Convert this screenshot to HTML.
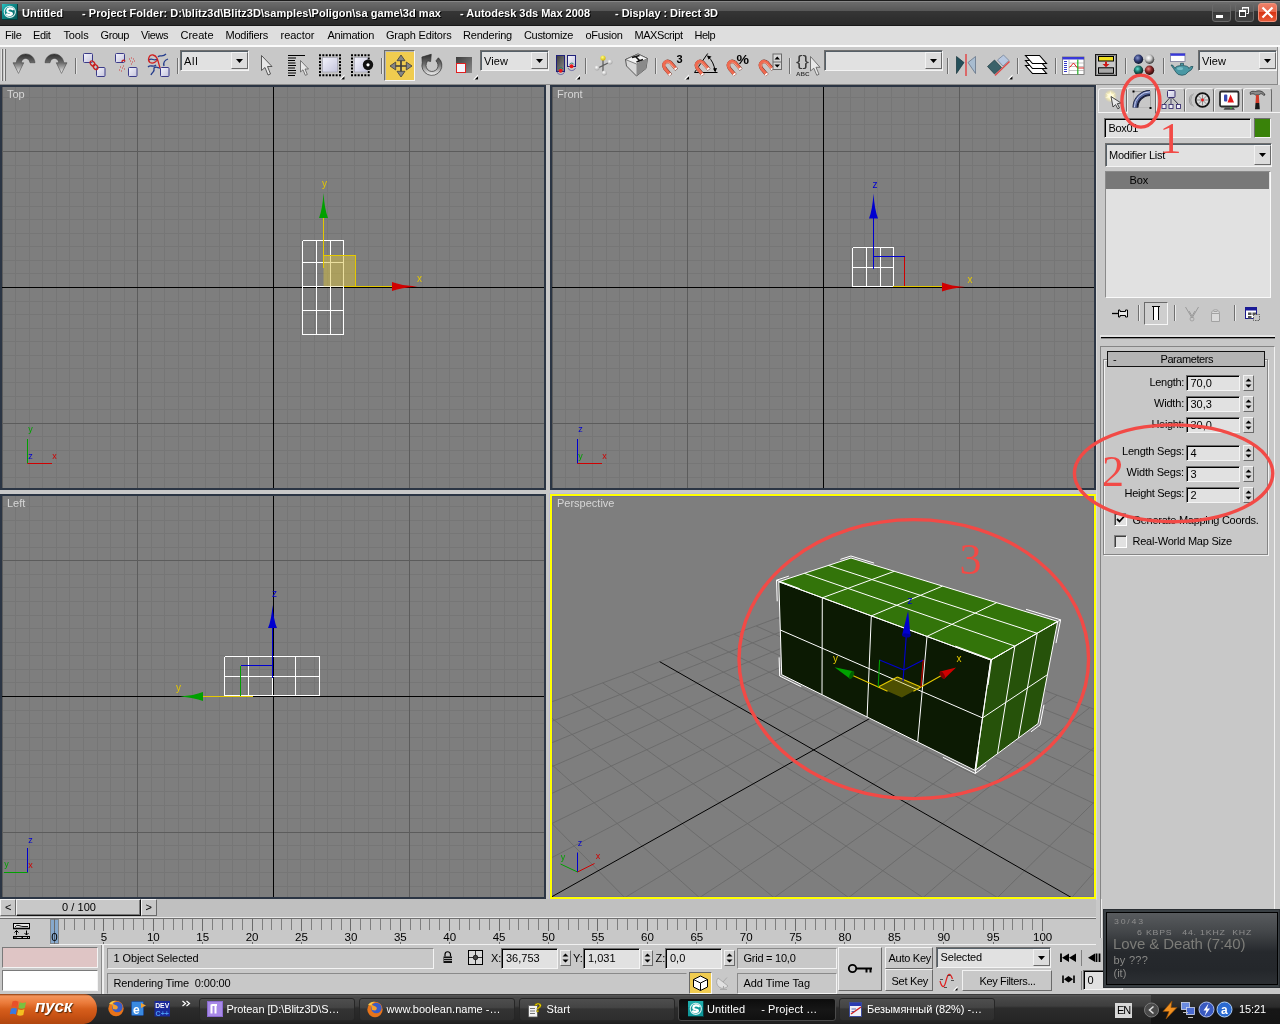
<!DOCTYPE html>
<html><head><meta charset="utf-8"><title>Untitled - Autodesk 3ds Max 2008</title>
<style>
html,body{margin:0;padding:0;}
body{width:1280px;height:1024px;overflow:hidden;position:relative;background:#c8c8c8;font-family:"Liberation Sans",sans-serif;font-size:11px;color:#000;}
.a{position:absolute;box-sizing:border-box;}
.t{position:absolute;white-space:pre;font-size:11px;}
svg{position:absolute;overflow:visible;}
.vp{position:absolute;box-sizing:border-box;border:2px solid #2b3544;background:#7e7e7e;overflow:hidden;}
.sunk{position:absolute;box-sizing:border-box;background:#e1e1e1;border:1px solid;border-color:#6e6e6e #f4f4f4 #f4f4f4 #6e6e6e;box-shadow:inset 1px 1px 0 #000;}
.dd{box-shadow:inset 1px 1px 0 #566068;}
.btn{position:absolute;box-sizing:border-box;background:#c8c8c8;border:1px solid;border-color:#f2f2f2 #6a6a6a #6a6a6a #f2f2f2;}
#wrap{position:absolute;left:0;top:0;width:1280px;height:1024px;will-change:transform;}
</style></head><body><div id="wrap">
<!-- title bar -->
<div class="a" style="left:0;top:0;width:1280px;height:26px;background:linear-gradient(#1c1c1c 0,#1c1c1c 1px,#888 1px,#888 2px,#6c6c6c 2px,#585858 10.5px,#363636 11px,#2a2a2a 25px,#181818 25px,#181818 26px);"></div>
<svg style="left:2px;top:4px" width="16" height="16" viewBox="0 0 16 16"><defs><linearGradient id="gTeal" x1="0" y1="0" x2="1" y2="1"><stop offset="0" stop-color="#2cc4c4"/><stop offset="0.35" stop-color="#0e9090"/><stop offset="1" stop-color="#065858"/></linearGradient></defs><rect x="0" y="0" width="16" height="16" fill="#053c3c"/><rect x="0" y="0" width="15" height="15" fill="url(#gTeal)"/><circle cx="7.800" cy="7.800" r="5.600" fill="none" stroke="#d8eeee" stroke-width="1.100"/><path d="M10.800 5.300C9 3.600 5.500 4.200 5.300 6.600S9 8 9.800 9.400S7.500 11.800 5 10.300" fill="none" stroke="#ffffff" stroke-width="2.200" stroke-linecap="round"/></svg>
<span class="t " style="left:22px;top:6.69px;line-height:13px;font-weight:bold;color:#fff;letter-spacing:0.008px;text-shadow:1px 1px 0 #000;">Untitled</span>
<span class="t " style="left:82px;top:6.69px;line-height:13px;font-weight:bold;color:#fff;letter-spacing:0.049px;text-shadow:1px 1px 0 #000;">- Project Folder: D:\blitz3d\Blitz3D\samples\Poligon\sa game\3d max</span>
<span class="t " style="left:460px;top:6.69px;line-height:13px;font-weight:bold;color:#fff;letter-spacing:-0.018px;text-shadow:1px 1px 0 #000;">- Autodesk 3ds Max 2008</span>
<span class="t " style="left:615px;top:6.69px;line-height:13px;font-weight:bold;color:#fff;letter-spacing:-0.044px;text-shadow:1px 1px 0 #000;">- Display : Direct 3D</span>
<!-- window buttons -->
<div class="a" style="left:1212px;top:3px;width:19px;height:19px;border-radius:3px;border:1px solid #6a6a6a;background:linear-gradient(#666 0,#585858 45%,#3a3a3a 50%,#444 100%);"></div>
<div class="a" style="left:1216px;top:15px;width:7px;height:3px;background:#fff;"></div>
<div class="a" style="left:1235px;top:3px;width:19px;height:19px;border-radius:3px;border:1px solid #6a6a6a;background:linear-gradient(#666 0,#585858 45%,#3a3a3a 50%,#444 100%);"></div>
<svg style="left:1235px;top:3px" width="19" height="19"><path d="M7.5 6.5V4.5H13.5V10.5H11.5" fill="none" stroke="#fff" stroke-width="1"/><rect x="4.5" y="7.5" width="6" height="6" fill="none" stroke="#fff" stroke-width="1"/><rect x="4" y="7" width="7" height="2" fill="#fff"/><rect x="7" y="4" width="7" height="1.5" fill="#fff"/></svg>
<div class="a" style="left:1258px;top:3px;width:19px;height:19px;border-radius:3px;border:1px solid #f0907a;background:linear-gradient(#ee8068 0,#e8664a 45%,#d83414 50%,#e85a38 100%);"></div>
<svg style="left:1258px;top:3px" width="19" height="19"><path d="M4.5 4.5L14.5 14.5M14.5 4.5L4.5 14.5" stroke="#fff" stroke-width="2.2"/></svg>
<!-- menu bar -->
<div class="a" style="left:0;top:26px;width:1280px;height:19px;background:#dedede;"></div>
<div class="a" style="left:0;top:45px;width:1280px;height:2px;background:#fbfbfb;"></div>
<span class="t " style="left:5px;top:28.69px;line-height:13px;letter-spacing:-0.306px;">File</span>
<span class="t " style="left:33px;top:28.69px;line-height:13px;letter-spacing:-0.364px;">Edit</span>
<span class="t " style="left:63.5px;top:28.69px;line-height:13px;letter-spacing:-0.136px;">Tools</span>
<span class="t " style="left:100.5px;top:28.69px;line-height:13px;letter-spacing:-0.414px;">Group</span>
<span class="t " style="left:141px;top:28.69px;line-height:13px;letter-spacing:-0.429px;">Views</span>
<span class="t " style="left:180.5px;top:28.69px;line-height:13px;letter-spacing:-0.003px;">Create</span>
<span class="t " style="left:225.5px;top:28.69px;line-height:13px;letter-spacing:-0.236px;">Modifiers</span>
<span class="t " style="left:280.5px;top:28.69px;line-height:13px;letter-spacing:-0.034px;">reactor</span>
<span class="t " style="left:327.5px;top:28.69px;line-height:13px;letter-spacing:-0.268px;">Animation</span>
<span class="t " style="left:386px;top:28.69px;line-height:13px;letter-spacing:-0.182px;">Graph Editors</span>
<span class="t " style="left:463px;top:28.69px;line-height:13px;letter-spacing:-0.195px;">Rendering</span>
<span class="t " style="left:524px;top:28.69px;line-height:13px;letter-spacing:-0.329px;">Customize</span>
<span class="t " style="left:585.5px;top:28.69px;line-height:13px;letter-spacing:-0.304px;">oFusion</span>
<span class="t " style="left:634.5px;top:28.69px;line-height:13px;letter-spacing:-0.440px;">MAXScript</span>
<span class="t " style="left:694.5px;top:28.69px;line-height:13px;letter-spacing:-0.530px;">Help</span>
<!-- toolbar -->
<div class="a" style="left:0;top:47px;width:1280px;height:38px;background:#c8c8c8;"></div>
<div class="a" style="left:0;top:84px;width:1279px;height:1px;background:#8a8a8a;"></div>
<div class="a" style="left:1277px;top:47px;width:1px;height:38px;background:#8a8a8a;"></div>
<div class="a" style="left:1278px;top:47px;width:2px;height:38px;background:#e8e8e8;"></div>
<!-- dropdowns -->
<div class="sunk dd" style="left:180px;top:50px;width:69px;height:21px;"></div>
<div class="btn" style="left:231px;top:52px;width:17px;height:17px;background:#dcdcdc;"></div>
<span class="t " style="left:184px;top:54.69px;line-height:13px;letter-spacing:0.758px;">All</span>
<div class="sunk dd" style="left:480px;top:50px;width:69px;height:21px;"></div>
<div class="btn" style="left:531px;top:52px;width:17px;height:17px;background:#dcdcdc;"></div>
<span class="t " style="left:484px;top:54.69px;line-height:13px;letter-spacing:0.089px;">View</span>
<div class="sunk dd" style="left:824px;top:50px;width:119px;height:21px;"></div>
<div class="btn" style="left:925px;top:52px;width:17px;height:17px;background:#dcdcdc;"></div>
<div class="sunk dd" style="left:1198px;top:50px;width:79px;height:21px;"></div>
<div class="btn" style="left:1259px;top:52px;width:17px;height:17px;background:#dcdcdc;"></div>
<span class="t " style="left:1202px;top:54.69px;line-height:13px;letter-spacing:0.089px;">View</span>
<!-- active move button -->
<div class="a" style="left:384px;top:50px;width:31px;height:31px;background:#f0cc50;border:1px solid;border-color:#6a6a6a #f6f6f6 #f6f6f6 #6a6a6a;box-shadow:inset 1px 1px 0 #b8b8b8;"></div>
<svg style="left:0;top:44px" width="1280" height="44" viewBox="0 44 1280 44">
<defs>
<linearGradient id="gArr" x1="0" y1="0" x2="0" y2="1"><stop offset="0" stop-color="#2e2e2e"/><stop offset="0.45" stop-color="#6a6a6a"/><stop offset="1" stop-color="#f4f4f4"/></linearGradient>
<linearGradient id="gBox" x1="0" y1="0" x2="1" y2="1"><stop offset="0" stop-color="#f4f4fc"/><stop offset="1" stop-color="#c4c4dc"/></linearGradient>
<linearGradient id="gDk" x1="0" y1="0" x2="1" y2="1"><stop offset="0" stop-color="#3c3c3c"/><stop offset="1" stop-color="#8a8a8a"/></linearGradient>
<linearGradient id="gMag" x1="0" y1="0" x2="1" y2="0"><stop offset="0" stop-color="#e0482a"/><stop offset="1" stop-color="#f6a088"/></linearGradient>
<radialGradient id="sBlue" cx="0.4" cy="0.35" r="0.7"><stop offset="0" stop-color="#8a98d0"/><stop offset="0.45" stop-color="#34407a"/><stop offset="1" stop-color="#080c1c"/></radialGradient>
<radialGradient id="sWhite" cx="0.4" cy="0.35" r="0.7"><stop offset="0" stop-color="#ffffff"/><stop offset="0.45" stop-color="#c8c8c8"/><stop offset="1" stop-color="#202020"/></radialGradient>
<radialGradient id="sTeal" cx="0.4" cy="0.35" r="0.7"><stop offset="0" stop-color="#60e0d0"/><stop offset="0.45" stop-color="#1c7068"/><stop offset="1" stop-color="#041410"/></radialGradient>
<radialGradient id="sRed" cx="0.4" cy="0.35" r="0.7"><stop offset="0" stop-color="#f08080"/><stop offset="0.45" stop-color="#882828"/><stop offset="1" stop-color="#1c0404"/></radialGradient>
<radialGradient id="sGray" cx="0.4" cy="0.35" r="0.7"><stop offset="0" stop-color="#ffffff"/><stop offset="1" stop-color="#a0a0a0"/></radialGradient>
<radialGradient id="sYel" cx="0.4" cy="0.35" r="0.7"><stop offset="0" stop-color="#ffff80"/><stop offset="1" stop-color="#d0b000"/></radialGradient>
<g id="fly"><path d="M-4.5 0.5L0.5 -4.5L0.5 0.5Z" fill="#fff"/><path d="M0.5 0.5L-2.8 0.5L0.5 -2.8Z" fill="#000"/></g>
<g id="magnet"><path d="M8.7 15.2L3.2 8.7C-0.2 3.2 4.8 -0.3 8.8 2.7L14.6 9.6" fill="none" stroke="#5a2a20" stroke-width="3.6"/><path d="M8.4 15L2.9 8.5C-0.5 3 4.5 -0.5 8.5 2.5L14.3 9.4" fill="none" stroke="#f06a50" stroke-width="3"/><path d="M3.6 6.5C2.8 3.5 5.5 2 8 3.6L12.5 8.8" fill="none" stroke="#f8a890" stroke-width="1"/><path d="M8.4 15L7.3 13.7M14.3 9.4L13.2 8.1" fill="none" stroke="#fff" stroke-width="3"/></g>
<path id="dd" d="M0 0H7L3.5 4Z" fill="#000"/>
</defs>
<!-- grip -->
<path d="M2.5 49V81M5.5 49V81" stroke="#6e6e6e" stroke-width="1"/><path d="M1.5 49V81M4.5 49V81" stroke="#e2e2e2" stroke-width="1"/>
<!-- separators -->
<path d="M75.5 58V74M177.5 58V74M381.5 58V74M585.5 58V74M655.5 58V74M789.5 58V74M947.5 58V74M1017.5 58V74M1055.5 58V74M1125.5 58V74M1163.5 58V74" stroke="#707070" stroke-width="1"/>
<path d="M76.5 58V74M178.5 58V74M382.5 58V74M586.5 58V74M656.5 58V74M790.5 58V74M948.5 58V74M1018.5 58V74M1056.5 58V74M1126.5 58V74M1164.5 58V74" stroke="#e4e4e4" stroke-width="1"/>
<!-- dropdown arrows -->
<use href="#dd" x="236" y="59"/><use href="#dd" x="536" y="59"/><use href="#dd" x="930" y="59"/><use href="#dd" x="1264" y="59"/>
<!-- undo -->
<path d="M13 62.75L18.5 73.4L23.75 62.75L21.25 62.75C21.5 57.5 29 56.5 30 62.75L35 62.75C34 51 17.5 51 16.25 62.75Z" fill="url(#gArr)" stroke="#3a3a3a" stroke-width="0.5"/>
<!-- redo -->
<path d="M67 62.75 L61.5 73.4 L56.25 62.75 L58.75 62.75 C58.5 57.5 51 56.5 50 62.75 L45 62.75 C46 51 62.5 51 63.75 62.75 Z" fill="url(#gArr)" stroke="#3a3a3a" stroke-width="0.5"/>
<!-- link -->
<rect x="83.5" y="53.5" width="9" height="9" rx="1" fill="url(#gBox)" stroke="#3a3a88"/><rect x="96.500" y="67.500" width="8.500" height="9" rx="1" fill="url(#gBox)" stroke="#3a3a88"/>
<ellipse cx="92.500" cy="63.500" rx="2" ry="2.800" transform="rotate(-40 92.500 63.500)" fill="none" stroke="#c82020" stroke-width="1.300"/><ellipse cx="95.500" cy="67" rx="2" ry="2.800" transform="rotate(-40 95.500 67)" fill="none" stroke="#c82020" stroke-width="1.300"/>
<!-- unlink -->
<rect x="115.500" y="53.500" width="9" height="9" rx="1" fill="url(#gBox)" stroke="#3a3a88"/><rect x="128.500" y="67.500" width="8.500" height="9" rx="1" fill="url(#gBox)" stroke="#3a3a88"/>
<path d="M122 62C122 60 124.500 59.500 125 61.500" fill="none" stroke="#c82020" stroke-width="1.400"/>
<path d="M129 59h1M131 58h1M133 59h1M130 61h1M132 62h1M134 61h1M131 64h1M120 67h1M122 68h1M119 70h1M121 71h1M123 66h1M124 69h1" stroke="#d04040" stroke-width="1"/>
<!-- bind space warp -->
<rect x="160.500" y="67.500" width="8.500" height="9" rx="1" fill="url(#gBox)" stroke="#3a3a88"/>
<path d="M149 60C152 57 154 62 157 59M158 57C160 54 162 58 166 54M148 67C151 64 153 68 156 65M164 66C163 62 165 60 168 59M151 75C152 71 155 73 154 68C156 66 158 68 160 68" fill="none" stroke="#243c8c" stroke-width="1.300"/>
<path d="M160 68C158 62 158 56 153 55C149 54.500 147 60 150 62.500C153 64 157 62 157.500 59" fill="none" stroke="#d02020" stroke-width="1.300"/>
<!-- select arrow -->
<path d="M261.500 55.500L261.500 70.500L265 67.500L268 75L270.500 74L267.500 66.500L272 66.500Z" fill="#e8e8e8" stroke="#4a4a4a" stroke-width="0.900"/>
<!-- select by name -->
<path d="M288 55.500H305M288 58H296M288 60.500H295M288 63H295.500M288 65.500H296M288 68H295M288 70.500H296M288 73H296M288 75.500H295" stroke="#000" stroke-width="1.100"/>
<path d="M300.500 60.500L300.500 72L303 69.800L305.300 75.300L307.300 74.500L305 69L308.500 69Z" fill="#e8e8e8" stroke="#5a5a5a" stroke-width="0.800"/>
<!-- rect region -->
<rect x="320" y="55.250" width="20" height="20" fill="none" stroke="#000" stroke-width="2" stroke-dasharray="2 1.333" stroke-dashoffset="1"/>
<rect x="322.500" y="57.500" width="15" height="14.500" fill="url(#gBox)" stroke="#9a9aa8" stroke-width="0.600"/>
<use href="#fly" x="344" y="79"/>
<!-- window/crossing -->
<rect x="352" y="55.250" width="16.667" height="20" fill="none" stroke="#000" stroke-width="2" stroke-dasharray="2 1.333" stroke-dashoffset="1"/>
<rect x="354.500" y="57.500" width="13" height="14.500" fill="url(#gBox)" stroke="#9a9aa8" stroke-width="0.600"/>
<circle cx="368" cy="64.800" r="5.200" fill="#111"/><circle cx="368" cy="64.800" r="1.600" fill="#fff"/>
<!-- move -->
<path d="M401 59V73M394 66H408" stroke="#3c3c3c" stroke-width="1.700"/><path d="M401 55L405 60.700L397 60.700ZM401 77L405 71.300L397 71.300ZM390 66L395.700 62L395.700 70ZM412 66L406.300 62L406.300 70Z" fill="#858585" stroke="#3c3c3c" stroke-width="0.800"/>
<!-- rotate -->
<path d="M438.4 57.8A10 10 0 1 1 422.3 62.5L421.9 57.1L431.25 54.25L430.6 61.5L427.5 60.8L426.4 63.4A6 6 0 1 0 435.9 60.9Z" fill="url(#gArr)" stroke="#2e2e2e" stroke-width="0.700"/>
<!-- scale -->
<rect x="456" y="57" width="16" height="16" fill="url(#gDk)"/><rect x="456.500" y="63.500" width="9" height="9" fill="#f4f4fc" stroke="#e02020"/>
<use href="#fly" x="477.500" y="79"/>
<!-- pivot -->
<rect x="556.500" y="55.500" width="8" height="16" fill="url(#gDk)" stroke="#20207a"/><rect x="567.500" y="55.500" width="8" height="11" fill="url(#gBox)" stroke="#20207a"/>
<path d="M557 72A4 4 0 0 0 564.500 72M568 68A4 4 0 0 0 575.500 68" fill="none" stroke="#4a4a9a" stroke-width="0.700"/>
<circle cx="560.600" cy="70.800" r="2" fill="#e81818"/><circle cx="571.500" cy="66.300" r="2" fill="#e81818"/>
<path d="M558.500 69A2.500 2.500 0 0 1 563 69M569.500 64.500A2.500 2.500 0 0 1 574 64.500" fill="none" stroke="#208060" stroke-width="0.900"/>
<use href="#fly" x="579.500" y="79"/>
<!-- manipulate -->
<path d="M603 59V72.500M598 68L610 62" stroke="#5a5a5a" stroke-width="1.200"/>
<circle cx="603" cy="58" r="2.600" fill="url(#sYel)"/><circle cx="610" cy="62" r="2.500" fill="url(#sGray)"/><circle cx="597" cy="68" r="2.500" fill="url(#sGray)"/><circle cx="604.300" cy="73" r="2.500" fill="url(#sGray)"/>
<!-- keyboard override -->
<path d="M625.500 59.500L638 54L647.500 58.500L646 68.500L636.500 76L626.500 66Z" fill="#d8d8d8" stroke="#3a3a3a" stroke-width="0.800"/>
<path d="M625.500 59.500L636.500 64L647.500 58.500L638 54Z" fill="#f2f2f2" stroke="#3a3a3a" stroke-width="0.600"/><path d="M636.500 64L636.500 76L646 68.500L647.500 58.500Z" fill="#8a8a8a"/>
<path d="M632 57.500L639.500 55.500M635.500 56.500L639.500 60.500M636.500 62L643 59.500" stroke="#111" stroke-width="1.600"/>
<!-- snaps -->
<use href="#magnet" x="662" y="60"/><text x="676.500" y="62.800" font-size="11" font-weight="bold" font-family="Liberation Sans,sans-serif">3</text><use href="#fly" x="688.500" y="79"/>
<path d="M694.500 72.500H717.500M694.500 72.500L707.700 53.500" stroke="#000" stroke-width="1"/><path d="M708 56.500Q714 62 715 71" fill="none" stroke="#000" stroke-width="1"/><path d="M707 55.500L711.500 56.500L708.500 59.500ZM715.300 72.500L713 68.500L717 68Z" fill="#000"/>
<use href="#magnet" x="694.500" y="60"/>
<use href="#magnet" x="726.500" y="60"/><text x="736.500" y="63.500" font-size="12" font-weight="bold" font-family="Liberation Sans,sans-serif" textLength="12.500" lengthAdjust="spacingAndGlyphs">%</text>
<use href="#magnet" x="758.500" y="60"/>
<rect x="772.500" y="53.500" width="9.500" height="16.500" fill="#6a6a6a"/><rect x="773.500" y="54.500" width="7.500" height="7" fill="#d6d6d6"/><rect x="773.500" y="62.500" width="7.500" height="6.500" fill="#d6d6d6"/><path d="M774.500 59.500H780L777.250 56.500ZM774.500 64.500H780L777.250 67.500Z" fill="#000"/>
<!-- named selection sets -->
<text x="796" y="66" font-size="14" font-family="Liberation Sans,sans-serif" fill="#3a3a3a" textLength="13" lengthAdjust="spacingAndGlyphs">{}</text>
<text x="796" y="75.500" font-size="5.500" font-weight="bold" font-family="Liberation Sans,sans-serif" fill="#3a3a3a" textLength="13.500" lengthAdjust="spacingAndGlyphs">ABC</text>
<path d="M810.500 56.500L810.500 71L813.800 68.200L816.800 75.300L819 74.300L816 67.300L820 67.300Z" fill="#e8e8e8" stroke="#5a5a5a" stroke-width="0.800"/>
<!-- mirror -->
<path d="M956.500 56.500V73.500L964 62.500Z" fill="#24505a" stroke="#16323a" stroke-width="0.700"/><path d="M975.500 56.500V73.500L968 62.500Z" fill="#a8bcd0" stroke="#5a6a80" stroke-width="0.700"/><path d="M966 54V76" stroke="#e05050" stroke-width="1.600"/>
<!-- align -->
<path d="M987.500 66.500L994.500 60L1001.500 67.500L994.500 74Z" fill="#3a626a" stroke="#1c3a40" stroke-width="0.700"/><path d="M997.500 60L1003.500 55L1009 60.500L1003 66Z" fill="#b8c8e0" stroke="#6a7a90" stroke-width="0.700"/><path d="M995 75.500L1009.500 61.500" stroke="#e04848" stroke-width="1.400"/>
<use href="#fly" x="1012" y="79"/>
<!-- layers -->
<path d="M1025.500 65.500H1039.500L1046.500 73.500H1032.500Z" fill="#fff" stroke="#000" stroke-width="1.100"/><path d="M1025.500 60.500H1039.500L1046.500 68.500H1032.500Z" fill="#fff" stroke="#000" stroke-width="1.100"/><path d="M1025.500 55.500H1039.500L1046.500 63.500H1032.500Z" fill="#fff" stroke="#000" stroke-width="1.100"/>
<!-- curve editor -->
<rect x="1062.500" y="57" width="21.500" height="17.500" fill="#fff" stroke="#6a6a6a" stroke-width="0.800"/><rect x="1062.500" y="57" width="21.500" height="2.500" fill="#3838d8"/>
<path d="M1069 59.500V74.500M1069 63H1084M1069 66.500H1084M1069 70.500H1084" stroke="#9a9a9a" stroke-width="0.600"/>
<path d="M1064 61.500h3M1064 63.500h3M1064 65.500h3M1064 67.500h3M1064 69.500h3M1064 71.500h3" stroke="#3838c8" stroke-width="1"/>
<path d="M1069.500 67.500L1073.500 63L1077.500 68H1084" fill="none" stroke="#e02020" stroke-width="1"/><path d="M1077.800 59.500V74.500" stroke="#20b020" stroke-width="1.200"/>
<!-- schematic -->
<rect x="1095.500" y="54.500" width="21" height="21" fill="#c8c8c8" stroke="#1a1a1a" stroke-width="1"/><rect x="1096.500" y="55.500" width="19" height="19" fill="none" stroke="#8a8a8a" stroke-width="1"/>
<rect x="1098.500" y="56.500" width="15" height="4.500" fill="#f0e020" stroke="#000" stroke-width="1"/><rect x="1098.500" y="67.800" width="15" height="5.500" fill="#a8a8a8" stroke="#000" stroke-width="1"/>
<path d="M1105 61.500H1107V64H1109.500L1106 67.300L1102.500 64H1105Z" fill="#d01818"/>
<!-- material editor -->
<circle cx="1138.500" cy="59.300" r="4.700" fill="url(#sBlue)"/><circle cx="1149.500" cy="59.300" r="4.700" fill="url(#sWhite)"/><circle cx="1138.500" cy="70.300" r="4.700" fill="url(#sTeal)"/><circle cx="1149.500" cy="70.300" r="4.700" fill="url(#sRed)"/>
<!-- render -->
<rect x="1170.500" y="53.500" width="14.500" height="8" fill="#fff" stroke="#7a7a9a" stroke-width="0.800"/><rect x="1170.500" y="53.500" width="14.500" height="2.300" fill="#3838d8"/>
<path d="M1171 65Q1173 64 1175 68.500C1175 64.500 1189 64.500 1189 68.500Q1190.500 65.500 1193 66.500Q1192.500 70 1188 72Q1186 75.300 1182 75.300Q1177.500 75.300 1175.800 72Q1173.500 68.500 1171 65Z" fill="#4a98a4" stroke="#1c4a54" stroke-width="0.700"/><path d="M1180.500 65.200V63.300H1183.500V65.200" fill="#4a98a4" stroke="#1c4a54" stroke-width="0.700"/><ellipse cx="1180" cy="68.500" rx="3" ry="1.500" fill="#8accd4" opacity="0.700"/>
</svg>
<!-- viewports -->
<div class="vp" style="left:0px;top:85px;width:546px;height:405px;border-color:#2b3544;"></div>
<div class="vp" style="left:550px;top:85px;width:546px;height:405px;border-color:#2b3544;"></div>
<div class="vp" style="left:0px;top:494px;width:546px;height:405px;border-color:#2b3544;"></div>
<div class="vp" style="left:550px;top:494px;width:546px;height:405px;border-color:#ffff00;box-shadow:0 0 0 1px #bcbcd4, inset 0 0 0 1px #72728e;"></div>
<svg style="left:0;top:0" width="1100" height="900" viewBox="0 0 1100 900" shape-rendering="crispEdges">
<path d="M15.5 87V488M29.5 87V488M42.5 87V488M56.5 87V488M69.5 87V488M83.5 87V488M97.5 87V488M110.5 87V488M124.5 87V488M151.5 87V488M164.5 87V488M178.5 87V488M192.5 87V488M205.5 87V488M219.5 87V488M232.5 87V488M246.5 87V488M259.5 87V488M287.5 87V488M300.5 87V488M314.5 87V488M327.5 87V488M341.5 87V488M354.5 87V488M368.5 87V488M382.5 87V488M395.5 87V488M422.5 87V488M436.5 87V488M449.5 87V488M463.5 87V488M477.5 87V488M490.5 87V488M504.5 87V488M517.5 87V488M531.5 87V488M2 97.5H544M2 111.5H544M2 124.5H544M2 138.5H544M2 165.5H544M2 178.5H544M2 192.5H544M2 206.5H544M2 219.5H544M2 233.5H544M2 246.5H544M2 260.5H544M2 273.5H544M2 301.5H544M2 314.5H544M2 328.5H544M2 341.5H544M2 355.5H544M2 368.5H544M2 382.5H544M2 396.5H544M2 409.5H544M2 436.5H544M2 450.5H544M2 463.5H544M2 477.5H544" stroke="#767676" stroke-width="1"/>
<path d="M2.5 87V488M137.5 87V488M409.5 87V488M2 151.5H544M2 423.5H544" stroke="#5c5c5c" stroke-width="1"/>
<path d="M273.5 87V488M2 287.5H544" stroke="#000" stroke-width="1"/>
<path d="M565.5 87V488M579.5 87V488M592.5 87V488M606.5 87V488M619.5 87V488M633.5 87V488M647.5 87V488M660.5 87V488M674.5 87V488M701.5 87V488M714.5 87V488M728.5 87V488M742.5 87V488M755.5 87V488M769.5 87V488M782.5 87V488M796.5 87V488M809.5 87V488M837.5 87V488M850.5 87V488M864.5 87V488M877.5 87V488M891.5 87V488M904.5 87V488M918.5 87V488M932.5 87V488M945.5 87V488M972.5 87V488M986.5 87V488M999.5 87V488M1013.5 87V488M1027.5 87V488M1040.5 87V488M1054.5 87V488M1067.5 87V488M1081.5 87V488M552 97.5H1094M552 111.5H1094M552 124.5H1094M552 138.5H1094M552 165.5H1094M552 178.5H1094M552 192.5H1094M552 206.5H1094M552 219.5H1094M552 233.5H1094M552 246.5H1094M552 260.5H1094M552 273.5H1094M552 301.5H1094M552 314.5H1094M552 328.5H1094M552 341.5H1094M552 355.5H1094M552 368.5H1094M552 382.5H1094M552 396.5H1094M552 409.5H1094M552 436.5H1094M552 450.5H1094M552 463.5H1094M552 477.5H1094" stroke="#767676" stroke-width="1"/>
<path d="M552.5 87V488M687.5 87V488M959.5 87V488M552 151.5H1094M552 423.5H1094" stroke="#5c5c5c" stroke-width="1"/>
<path d="M823.5 87V488M552 287.5H1094" stroke="#000" stroke-width="1"/>
<path d="M15.5 496V897M29.5 496V897M42.5 496V897M56.5 496V897M69.5 496V897M83.5 496V897M97.5 496V897M110.5 496V897M124.5 496V897M151.5 496V897M164.5 496V897M178.5 496V897M192.5 496V897M205.5 496V897M219.5 496V897M232.5 496V897M246.5 496V897M259.5 496V897M287.5 496V897M300.5 496V897M314.5 496V897M327.5 496V897M341.5 496V897M354.5 496V897M368.5 496V897M382.5 496V897M395.5 496V897M422.5 496V897M436.5 496V897M449.5 496V897M463.5 496V897M477.5 496V897M490.5 496V897M504.5 496V897M517.5 496V897M531.5 496V897M2 506.5H544M2 520.5H544M2 533.5H544M2 547.5H544M2 574.5H544M2 587.5H544M2 601.5H544M2 615.5H544M2 628.5H544M2 642.5H544M2 655.5H544M2 669.5H544M2 682.5H544M2 710.5H544M2 723.5H544M2 737.5H544M2 750.5H544M2 764.5H544M2 777.5H544M2 791.5H544M2 805.5H544M2 818.5H544M2 845.5H544M2 859.5H544M2 872.5H544M2 886.5H544" stroke="#767676" stroke-width="1"/>
<path d="M2.5 496V897M137.5 496V897M409.5 496V897M2 560.5H544M2 832.5H544" stroke="#5c5c5c" stroke-width="1"/>
<path d="M273.5 496V897M2 696.5H544" stroke="#000" stroke-width="1"/>
</svg>
<svg style="left:0;top:0" width="1100" height="900" viewBox="0 0 1100 900">
<path d="M302.5 240.5V334.5M316.5 240.5V334.5M330.5 240.5V334.5M343.5 240.5V334.5M302.5 240.5H343.5M302.5 262.5H343.5M302.5 286.5H343.5M302.5 310.5H343.5M302.5 334.5H343.5" stroke="#fff" stroke-width="1" fill="none" shape-rendering="crispEdges"/>
<rect x="323.5" y="255.5" width="31.500" height="31" fill="#d8c040" fill-opacity="0.5"/>
<path d="M323.5 255.5H355V286.5M323.5 218V267.5M343.5 286.5H392" stroke="#e4c800" stroke-width="1" fill="none" shape-rendering="crispEdges"/>
<path d="M323.5 193Q322.500 209 319 218H328Q324.500 209 323.500 193Z" fill="#00a000"/>
<path d="M417.5 286.500Q401 285.500 392 282V291Q401 287.500 417.500 286.500Z" fill="#d00000"/>
<text x="324.5" y="187" fill="#e4c800" font-size="10" font-family="Liberation Sans,sans-serif" text-anchor="middle">y</text>
<text x="419.5" y="282" fill="#e4c800" font-size="10" font-family="Liberation Sans,sans-serif" text-anchor="middle">x</text>
<path d="M27.5 439V463.500" stroke="#00a000" stroke-width="1"/><path d="M27.500 463.500H52" stroke="#d00000" stroke-width="1"/>
<text x="30.5" y="432" fill="#00a000" font-size="9" font-family="Liberation Sans,sans-serif" text-anchor="middle">y</text>
<text x="30.5" y="458.5" fill="#0000d0" font-size="9" font-family="Liberation Sans,sans-serif" text-anchor="middle">z</text>
<text x="54.5" y="458.5" fill="#d00000" font-size="9" font-family="Liberation Sans,sans-serif" text-anchor="middle">x</text>
<path d="M852.5 247.5V286.5M866.5 247.5V286.5M880.5 247.5V286.5M893.5 247.5V286.5M852.5 247.5H893.5M852.5 267.5H893.5M852.5 286.5H893.5" stroke="#fff" stroke-width="1" fill="none" shape-rendering="crispEdges"/>
<path d="M873.5 218V268.5M873.5 256.5H905" stroke="#0000d0" stroke-width="1" fill="none" shape-rendering="crispEdges"/>
<path d="M904.5 256.5V287" stroke="#d00000" stroke-width="1" fill="none" shape-rendering="crispEdges"/>
<path d="M893 286.500H942" stroke="#e4c800" stroke-width="1" fill="none" shape-rendering="crispEdges"/>
<path d="M873.5 193.500Q872.500 209.500 869 218.500H878Q874.500 209.500 873.500 193.500Z" fill="#0000d0"/>
<path d="M965 287Q951 286 942 282.500V291.500Q951 288 965 287Z" fill="#d00000"/>
<text x="875" y="187.5" fill="#0000d0" font-size="10" font-family="Liberation Sans,sans-serif" text-anchor="middle">z</text>
<text x="970" y="283" fill="#e4c800" font-size="10" font-family="Liberation Sans,sans-serif" text-anchor="middle">x</text>
<path d="M577.5 439V463.500" stroke="#0000d0" stroke-width="1"/><path d="M577.500 463.500H602" stroke="#d00000" stroke-width="1"/>
<text x="580.5" y="432" fill="#0000d0" font-size="9" font-family="Liberation Sans,sans-serif" text-anchor="middle">z</text>
<text x="580.5" y="458.5" fill="#00a000" font-size="9" font-family="Liberation Sans,sans-serif" text-anchor="middle">y</text>
<text x="604.5" y="458.5" fill="#d00000" font-size="9" font-family="Liberation Sans,sans-serif" text-anchor="middle">x</text>
<path d="M224.5 656.5V695.5M248.5 656.5V695.5M272.5 656.5V695.5M295.5 656.5V695.5M319.5 656.5V695.5M224.5 656.5H319.5M224.5 676.5H319.5M224.5 695.5H319.5" stroke="#fff" stroke-width="1" fill="none" shape-rendering="crispEdges"/>
<path d="M272.5 627.500V677.500M240.500 665.500H272.500" stroke="#0000d0" stroke-width="1" fill="none" shape-rendering="crispEdges"/>
<path d="M240.500 665.500V696" stroke="#00a000" stroke-width="1" fill="none" shape-rendering="crispEdges"/>
<path d="M203 696H253" stroke="#e4c800" stroke-width="1" fill="none" shape-rendering="crispEdges"/>
<path d="M272.500 605Q271.500 620 268 628H277Q273.500 620 272.500 605Z" fill="#0000d0"/>
<path d="M180 696.500Q194 695.500 203 692V701Q194 697.500 180 696.500Z" fill="#00a000"/>
<text x="274.5" y="596.5" fill="#0000d0" font-size="10" font-family="Liberation Sans,sans-serif" text-anchor="middle">z</text>
<text x="178.5" y="691" fill="#e4c800" font-size="10" font-family="Liberation Sans,sans-serif" text-anchor="middle">y</text>
<path d="M27.500 848V872.500" stroke="#0000d0" stroke-width="1"/><path d="M4 872.500H27.500" stroke="#00a000" stroke-width="1"/>
<text x="30.5" y="842.5" fill="#0000d0" font-size="9" font-family="Liberation Sans,sans-serif" text-anchor="middle">z</text>
<text x="30.5" y="867.5" fill="#d00000" font-size="9" font-family="Liberation Sans,sans-serif" text-anchor="middle">x</text>
<text x="6.5" y="867" fill="#00a000" font-size="9" font-family="Liberation Sans,sans-serif" text-anchor="middle">y</text>
<text x="7" y="98" fill="#d6d6d6" font-size="11" font-family="Liberation Sans,sans-serif">Top</text>
<text x="557" y="98" fill="#d6d6d6" font-size="11" font-family="Liberation Sans,sans-serif">Front</text>
<text x="7" y="507" fill="#d6d6d6" font-size="11" font-family="Liberation Sans,sans-serif">Left</text>
<text x="557" y="507" fill="#d6d6d6" font-size="11" font-family="Liberation Sans,sans-serif">Perspective</text>
</svg>
<svg style="left:552px;top:496px" width="542" height="401" viewBox="552 496 542 401">
<defs><clipPath id="cpv"><rect x="552" y="496" width="542" height="401"/></clipPath></defs><g clip-path="url(#cpv)">
<path d="M806.6 1197.7L423.5 749.5M806.6 1197.7L1201.9 750.2M860.1 1137.1L464.3 734.3M754.9 1137.3L1161.9 735.0M906.7 1084.4L502.5 720.2M709.9 1084.6L1124.6 720.8M947.7 1038.0L538.0 706.9M670.3 1038.2L1089.7 707.6M984.0 996.9L571.4 694.5M635.1 997.1L1057.0 695.2M1016.4 960.2L602.6 682.9M603.7 960.4L1026.3 683.5M1045.5 927.3L632.0 672.0M575.6 927.4L997.4 672.5M1095.5 870.7L685.8 652.0M527.0 870.6L944.4 652.4M1117.2 846.2L710.5 642.8M505.9 846.0L920.1 643.1M1137.0 823.7L733.9 634.1M486.6 823.4L897.1 634.4M1155.2 803.1L756.0 625.9M468.9 802.7L875.3 626.1M1172.0 784.1L777.0 618.1M452.6 783.6L854.5 618.2M1187.6 766.5L797.0 610.6M437.5 765.9L834.8 610.7M1201.9 750.2L816.0 603.6M423.5 749.5L816.0 603.6" stroke="#6a6a6a" stroke-width="0.9" fill="none"/>
<path d="M1071.7 897.7L659.7 661.7M550.1 897.7L970.2 662.2" stroke="#000" stroke-width="1" fill="none"/>
<path d="M990.8 660.0L1057.7 621.4L851.0 558.0L778.8 581.7Z" fill="#33740a"/>
<path d="M975.0 770.4L781.7 674.7L778.8 581.7L990.8 660.0Z" fill="#0c1a03"/>
<path d="M975.0 770.4L1038.0 723.6L1057.7 621.4L990.8 660.0Z" fill="#26520a"/>
<path d="M990.8 660.0L1057.7 621.4M927.0 636.4L996.6 602.7M871.3 615.9L942.5 586.1M822.3 597.8L894.3 571.3M778.8 581.7L851.0 558.0M990.8 660.0L778.8 581.7M1014.9 646.1L804.4 573.3M1037.2 633.3L828.4 565.4M1057.7 621.4L851.0 558.0M975.0 770.4L990.8 660.0M917.7 742.0L927.0 636.4M867.1 717.0L871.3 615.9M822.0 694.7L822.3 597.8M781.7 674.7L778.8 581.7M975.0 770.4L781.7 674.7M982.5 717.9L780.3 630.0M990.8 660.0L778.8 581.7M975.0 770.4L990.8 660.0M997.5 753.6L1014.9 646.1M1018.5 738.1L1037.2 633.3M1038.0 723.6L1057.7 621.4M975.0 770.4L1038.0 723.6M982.5 717.9L1047.4 674.7M990.8 660.0L1057.7 621.4" stroke="#fff" stroke-width="1" fill="none"/>
<path d="M975.3 773.5L986.2 765.3M975.3 773.5L942.9 757.3M975.3 773.5L978.4 751.7M991.7 659.5L1003.5 652.7M991.7 659.5L955.4 646.1M991.7 659.5L988.0 685.0M779.7 676.0L801.2 686.7M779.7 676.0L779.1 657.4M776.5 580.2L788.9 576.1M776.5 580.2L799.7 588.7M776.5 580.2L777.2 601.3M1040.0 725.0L1031.0 731.8M1040.0 725.0L1044.0 704.7M1060.6 619.8L1051.1 625.3M1060.6 619.8L1026.0 609.3M1060.6 619.8L1056.0 643.1M850.9 556.0L840.4 559.4M850.9 556.0L874.1 563.1" stroke="#fff" stroke-width="1" fill="none"/>
<path d="M901.8 697.6L920.9 687.0L897.4 676.9L878.2 686.9Z" fill="rgba(200,180,0,0.35)"/>
<path d="M920.9 687.0L897.4 676.9M897.4 676.9L878.2 686.9M913.4 691.2L942.3 675.1M887.5 691.2L851.7 675.0" stroke="#e4c800" stroke-width="1.1" fill="none"/>
<path d="M903.0 681.2L906.3 635.4M903.8 670.0L923.3 659.9M903.8 670.0L879.6 659.9" stroke="#0000d0" stroke-width="1.1" fill="none"/>
<path d="M920.9 687.0L923.3 659.9" stroke="#d00000" stroke-width="1.1" fill="none"/>
<path d="M878.2 686.9L879.6 659.9" stroke="#00a000" stroke-width="1.1" fill="none"/>
<path d="M956.1 667.4L944.4 678.8L940.3 671.4Z" fill="#d00000"/><ellipse cx="942.3" cy="675.1" rx="4.2" ry="2" transform="rotate(60.9 942.3 675.1)" fill="#800000"/>
<path d="M834.6 667.3L853.4 671.2L850.0 678.8Z" fill="#00a000"/><ellipse cx="851.7" cy="675.0" rx="4.2" ry="2" transform="rotate(-65.7 851.7 675.0)" fill="#006000"/>
<path d="M908.1 610.7L910.5 635.7L902.1 635.1Z" fill="#0000d0"/><ellipse cx="906.3" cy="635.4" rx="4.2" ry="2" transform="rotate(4.1 906.3 635.4)" fill="#0000a0"/>
<text x="910" y="604" fill="#0000d0" font-size="10" font-family="Liberation Sans,sans-serif" text-anchor="middle">z</text>
<text x="959" y="662" fill="#e4c800" font-size="10" font-family="Liberation Sans,sans-serif" text-anchor="middle">x</text>
<text x="835.5" y="662" fill="#e4c800" font-size="10" font-family="Liberation Sans,sans-serif" text-anchor="middle">y</text>
<path d="M577.5 872V852.5" stroke="#0000d0" stroke-width="1"/><path d="M577.5 872L594.500 863.500" stroke="#d00000" stroke-width="1"/><path d="M577.500 872L560.500 864" stroke="#00a000" stroke-width="1"/>
<text x="580" y="846" fill="#0000d0" font-size="9" font-family="Liberation Sans,sans-serif" text-anchor="middle">z</text>
<text x="563" y="859.5" fill="#00a000" font-size="9" font-family="Liberation Sans,sans-serif" text-anchor="middle">y</text>
<text x="598" y="858.5" fill="#d00000" font-size="9" font-family="Liberation Sans,sans-serif" text-anchor="middle">x</text>
</g></svg>
<!-- command panel -->
<div class="a" style="left:1096px;top:85px;width:184px;height:830px;background:#c8c8c8;"></div>
<div class="a" style="left:1096px;top:85px;width:1px;height:815px;background:#d8d8d8;"></div>
<!-- tabs -->
<div class="a" style="left:1098px;top:112px;width:182px;height:1px;background:#f4f4f4;"></div>
<div class="a" style="left:1098px;top:88px;width:29px;height:24px;border:1px solid;border-color:#f0f0f0 #6a6a6a transparent #f0f0f0;border-radius:3px 3px 0 0;"></div>
<div class="a" style="left:1156px;top:88px;width:29px;height:24px;border:1px solid;border-color:#f0f0f0 #6a6a6a transparent #f0f0f0;border-radius:3px 3px 0 0;"></div>
<div class="a" style="left:1185px;top:88px;width:29px;height:24px;border:1px solid;border-color:#f0f0f0 #6a6a6a transparent #f0f0f0;border-radius:3px 3px 0 0;"></div>
<div class="a" style="left:1214px;top:88px;width:29px;height:24px;border:1px solid;border-color:#f0f0f0 #6a6a6a transparent #f0f0f0;border-radius:3px 3px 0 0;"></div>
<div class="a" style="left:1243px;top:88px;width:29px;height:24px;border:1px solid;border-color:#f0f0f0 #6a6a6a transparent #f0f0f0;border-radius:3px 3px 0 0;"></div>
<div class="a" style="left:1127px;top:87px;width:29px;height:27px;background:#c8c8c8;border:1px solid;border-color:#f0f0f0 #6a6a6a transparent #f0f0f0;border-radius:3px 3px 0 0;"></div>
<svg style="left:1096px;top:84px" width="184" height="32" viewBox="1096 84 184 32">
<defs>
<radialGradient id="gStar"><stop offset="0" stop-color="#ffffff"/><stop offset="0.4" stop-color="#fff8c0"/><stop offset="1" stop-color="#f0e090" stop-opacity="0"/></radialGradient>
<linearGradient id="gTube" x1="0" y1="0" x2="1" y2="1"><stop offset="0" stop-color="#6a7ab0"/><stop offset="1" stop-color="#2a3460"/></linearGradient>
</defs>
<!-- create -->
<circle cx="1110.500" cy="96" r="6.500" fill="url(#gStar)"/><path d="M1110.500 90.500L1111.300 95L1115.500 93L1112.300 96L1116 98L1111.500 97.300L1110.500 101.500L1109.500 97.200L1105 98L1108.700 95.800L1105.500 93L1109.700 94.800Z" fill="#fffbe0"/>
<path d="M1111 96.500L1121 103L1117.300 103.700L1119.500 108L1117.800 108.800L1115.600 104.600L1113 107Z" fill="#e8e8e8" stroke="#222" stroke-width="0.800"/>
<!-- modify -->
<path d="M1133.500 91.500H1150.500V107.500" fill="none" stroke="#8a8a8a" stroke-width="0.600"/><path d="M1133.500 91.500V107.500H1150.500" fill="none" stroke="#aaa" stroke-width="0.500"/>
<path d="M1135.500 107.500A14.500 14.500 0 0 1 1150 93" fill="none" stroke="#10142a" stroke-width="6"/>
<path d="M1135.500 107.500A14.500 14.500 0 0 1 1150 93" fill="none" stroke="#5a6aa0" stroke-width="4.600"/>
<path d="M1134.300 107.500A15.700 15.700 0 0 1 1150 91.800" fill="none" stroke="#c8d0f0" stroke-width="1"/>
<path d="M1137.200 107.500A12.800 12.800 0 0 1 1150 94.700" fill="none" stroke="#10142a" stroke-width="1.100"/>
<rect x="1132.500" y="90.500" width="2" height="2" fill="#000"/><rect x="1149.500" y="107" width="2" height="2" fill="#000"/>
<!-- hierarchy -->
<path d="M1171 97.500V104.500M1170 97.500L1163.800 104.500M1172 97.500L1178.500 104.500" stroke="#3a3a4a" stroke-width="1"/><path d="M1171 98V104.500" stroke="#8a8a9a" stroke-width="1.600"/>
<rect x="1167.500" y="90.500" width="7.500" height="7" rx="1" fill="url(#gBox)" stroke="#3a3070" stroke-width="1"/>
<rect x="1162" y="104.500" width="4" height="4" fill="#f0f0fa" stroke="#3a3070" stroke-width="0.900"/><rect x="1169" y="104.500" width="4" height="4" fill="#f0f0fa" stroke="#3a3070" stroke-width="0.900"/><rect x="1176.500" y="104.500" width="4" height="4" fill="#f0f0fa" stroke="#3a3070" stroke-width="0.900"/>
<!-- motion -->
<path d="M1193.500 93.500A9 9 0 0 0 1193.500 106.500M1191.500 94.500A8 8 0 0 0 1191.500 105.500" fill="none" stroke="#909090" stroke-width="0.800"/>
<circle cx="1202.500" cy="100" r="6.800" fill="#dcdcdc" stroke="#111" stroke-width="1.700"/>
<path d="M1202.500 94.500V105.500M1197 100H1208M1198.600 96.100L1206.400 103.900M1206.400 96.100L1198.600 103.900" stroke="#555" stroke-width="0.600"/><circle cx="1202.500" cy="100" r="1.400" fill="#f01818"/>
<!-- display -->
<rect x="1220" y="91.500" width="18.500" height="15" rx="1.500" fill="#fff" stroke="#2a2a2a" stroke-width="1.800"/>
<rect x="1224" y="94.500" width="3.300" height="7" rx="1" fill="#3a4ab0"/><path d="M1227.500 102.500L1230.500 94.500L1234 102.500Z" fill="#e81818"/>
<path d="M1225 107.500H1233.500L1235 109.700H1223.500Z" fill="#4a4a4a"/><rect x="1230" y="107.300" width="2" height="1.200" fill="#30c030"/>
<!-- utilities -->
<path d="M1250 92.500C1252 90.500 1254 91.500 1255.500 91.500C1259 90 1263.500 91 1265 95L1263.500 95.300C1262 93 1260 93.500 1259 95H1255.500C1254 93.500 1252 93.500 1250.500 94.500Z" fill="#8a8a8a" stroke="#222" stroke-width="0.700"/>
<path d="M1256 95H1258.800L1259.300 103H1255.500Z" fill="#d03a28"/><path d="M1255.500 103H1259.300L1259.800 109.300H1255Z" fill="#1a1a1a"/>
</svg>
<!-- name + color -->
<div class="sunk" style="left:1104px;top:118px;width:147px;height:20px;"></div>
<span class="t " style="left:1108.5px;top:121.69px;line-height:13px;letter-spacing:-0.338px;">Box01</span>
<div class="a" style="left:1254px;top:118px;width:17px;height:20px;background:#398209;border:1px solid;border-color:#6e6e6e #f4f4f4 #f4f4f4 #6e6e6e;"></div>
<!-- modifier list -->
<div class="sunk dd" style="left:1105px;top:143px;width:167px;height:24px;"></div>
<div class="btn" style="left:1254px;top:145px;width:17px;height:20px;background:#dcdcdc;"></div>
<svg style="left:1259px;top:153px" width="7" height="4"><path d="M0 0H7L3.500 4Z" fill="#000"/></svg>
<span class="t " style="left:1109px;top:148.69px;line-height:13px;letter-spacing:-0.254px;">Modifier List</span>
<!-- stack -->
<div class="a" style="left:1105px;top:171px;width:166px;height:127px;background:#e1e1e1;border:1px solid;border-color:#8a8a8a #fafafa #fafafa #8a8a8a;"></div>
<div class="a" style="left:1106px;top:172px;width:163px;height:17px;background:#787878;"></div>
<span class="t " style="left:1129.5px;top:174.19px;line-height:13px;letter-spacing:-0.152px;">Box</span>
<!-- stack buttons -->
<div class="a" style="left:1144px;top:302px;width:24px;height:23px;background:#cecece;border:1px solid;border-color:#6a6a6a #f6f6f6 #f6f6f6 #6a6a6a;"></div>
<svg style="left:1100px;top:298px" width="180" height="32" viewBox="1100 298 180 32">
<path d="M1138.500 305V321M1174.500 305V321M1234.500 305V321" stroke="#707070" stroke-width="1"/><path d="M1139.500 305V321M1175.500 305V321M1235.500 305V321" stroke="#eaeaea" stroke-width="1"/>
<path d="M1112 313.500H1118.500" stroke="#000" stroke-width="1.300"/><path d="M1118.500 310H1120V311.500H1125.500V310H1127.500V317H1125.500V315.500H1120V317H1118.500Z" fill="#e8e8e8" stroke="#000" stroke-width="1"/>
<path d="M1153.500 307V320M1158.500 307V320" stroke="#000" stroke-width="1"/><rect x="1154" y="307" width="4" height="13" fill="#fff"/><path d="M1152 306.500H1160" stroke="#000" stroke-width="1"/>
<path d="M1185.500 307L1192 318L1198.500 307M1189 311L1192 316L1195 311" fill="none" stroke="#9a9a9a" stroke-width="1"/><circle cx="1192" cy="319" r="2" fill="none" stroke="#9a9a9a" stroke-width="0.800"/>
<path d="M1211.500 313.500V321.500H1219.500V313.500ZM1211.500 313.500C1211.500 308.500 1219.500 308.500 1219.500 313.500M1213.500 311.500H1217.500" fill="#dadada" stroke="#a2a2a2" stroke-width="1"/>
<rect x="1245.500" y="307.500" width="11" height="11" fill="#fff" stroke="#1a1a8a" stroke-width="1"/><rect x="1245.500" y="307.500" width="11" height="3" fill="#1a1a9a"/><rect x="1248" y="312.500" width="3.500" height="2.500" fill="#555"/><rect x="1252.500" y="312.500" width="3.500" height="2.500" fill="#555"/><rect x="1248" y="316" width="3.500" height="2.500" fill="#555"/><rect x="1253.500" y="314.500" width="6" height="6" fill="#c8c8c8" stroke="#444" stroke-width="0.800" stroke-dasharray="1.500 1"/>
</svg>
<div class="a" style="left:1100px;top:335px;width:175px;height:2px;background:#e2e2e2;"></div>
<div class="a" style="left:1101px;top:337px;width:174px;height:1px;background:#000;"></div><div class="a" style="left:1101px;top:338px;width:174px;height:1px;background:#8a8a8a;"></div>
<!-- rollout area -->
<div class="a" style="left:1100px;top:346px;width:175px;height:570px;border:1px solid;border-color:#858585 #f0f0f0 transparent #858585;"></div>
<div class="a" style="left:1103px;top:359px;width:165px;height:196px;border:1px solid #858585;box-shadow:1px 1px 0 #f2f2f2, inset 1px 1px 0 #f2f2f2;"></div>
<div class="a" style="left:1107px;top:351px;width:158px;height:16px;background:#b4b4b4;border:1px solid #111;"></div>
<span class="t " style="left:1113px;top:352.69px;line-height:13px;letter-spacing:0.836px;">-</span>
<span class="t " style="left:1160.5px;top:352.69px;line-height:13px;letter-spacing:-0.436px;">Parameters</span>
<div class="sunk" style="left:1186px;top:375px;width:54px;height:16px;"></div>
<div class="btn" style="left:1243px;top:375px;width:11px;height:16px;background:#d4d4d4;"></div>
<svg style="left:1245px;top:378px" width="7" height="10"><path d="M0.500 3.500H6.500L3.500 0.500ZM0.500 6.500H6.500L3.500 9.500Z" fill="#000"/></svg>
<span class="t " style="left:1149.5px;top:376.19px;line-height:13px;letter-spacing:-0.314px;">Length:</span>
<span class="t " style="left:1190.5px;top:376.69px;line-height:13px;">70,0</span>
<div class="sunk" style="left:1186px;top:396px;width:54px;height:16px;"></div>
<div class="btn" style="left:1243px;top:396px;width:11px;height:16px;background:#d4d4d4;"></div>
<svg style="left:1245px;top:399px" width="7" height="10"><path d="M0.500 3.500H6.500L3.500 0.500ZM0.500 6.500H6.500L3.500 9.500Z" fill="#000"/></svg>
<span class="t " style="left:1154px;top:397.19px;line-height:13px;letter-spacing:-0.196px;">Width:</span>
<span class="t " style="left:1190.5px;top:397.69px;line-height:13px;">30,3</span>
<div class="sunk" style="left:1186px;top:417px;width:54px;height:16px;"></div>
<div class="btn" style="left:1243px;top:417px;width:11px;height:16px;background:#d4d4d4;"></div>
<svg style="left:1245px;top:420px" width="7" height="10"><path d="M0.500 3.500H6.500L3.500 0.500ZM0.500 6.500H6.500L3.500 9.500Z" fill="#000"/></svg>
<span class="t " style="left:1151.5px;top:418.19px;line-height:13px;letter-spacing:-0.336px;">Height:</span>
<span class="t " style="left:1190.5px;top:418.69px;line-height:13px;">30,0</span>
<div class="sunk" style="left:1186px;top:445px;width:54px;height:16px;"></div>
<div class="btn" style="left:1243px;top:445px;width:11px;height:16px;background:#d4d4d4;"></div>
<svg style="left:1245px;top:448px" width="7" height="10"><path d="M0.500 3.500H6.500L3.500 0.500ZM0.500 6.500H6.500L3.500 9.500Z" fill="#000"/></svg>
<span class="t " style="left:1122px;top:445.19px;line-height:13px;letter-spacing:-0.236px;">Length Segs:</span>
<span class="t " style="left:1190.5px;top:446.69px;line-height:13px;">4</span>
<div class="sunk" style="left:1186px;top:466px;width:54px;height:16px;"></div>
<div class="btn" style="left:1243px;top:466px;width:11px;height:16px;background:#d4d4d4;"></div>
<svg style="left:1245px;top:469px" width="7" height="10"><path d="M0.500 3.500H6.500L3.500 0.500ZM0.500 6.500H6.500L3.500 9.500Z" fill="#000"/></svg>
<span class="t " style="left:1126.5px;top:466.19px;line-height:13px;letter-spacing:-0.164px;">Width Segs:</span>
<span class="t " style="left:1190.5px;top:467.69px;line-height:13px;">3</span>
<div class="sunk" style="left:1186px;top:487px;width:54px;height:16px;"></div>
<div class="btn" style="left:1243px;top:487px;width:11px;height:16px;background:#d4d4d4;"></div>
<svg style="left:1245px;top:490px" width="7" height="10"><path d="M0.500 3.500H6.500L3.500 0.500ZM0.500 6.500H6.500L3.500 9.500Z" fill="#000"/></svg>
<span class="t " style="left:1124.5px;top:487.19px;line-height:13px;letter-spacing:-0.290px;">Height Segs:</span>
<span class="t " style="left:1190.5px;top:488.69px;line-height:13px;">2</span>
<div class="sunk" style="left:1114px;top:513px;width:13px;height:13px;border-color:#808080 #fff #fff #808080;box-shadow:inset 1px 1px 0 #404040;"></div>
<svg style="left:1116px;top:515px" width="9" height="9"><path d="M1 4L3.500 6.500L8 1.500" fill="none" stroke="#000" stroke-width="1.800"/></svg>
<span class="t " style="left:1132.5px;top:513.69px;line-height:13px;letter-spacing:-0.279px;">Generate Mapping Coords.</span>
<div class="sunk" style="left:1114px;top:535px;width:13px;height:13px;border-color:#808080 #fff #fff #808080;box-shadow:inset 1px 1px 0 #404040;"></div>
<span class="t " style="left:1132.5px;top:535.19px;line-height:13px;letter-spacing:-0.222px;">Real-World Map Size</span>
<!-- bottom area -->
<div class="a" style="left:0;top:899px;width:1096px;height:18px;background:#c0c0c0;"></div>
<div class="btn" style="left:0;top:899px;width:16px;height:17px;"></div>
<div class="btn" style="left:16px;top:899px;width:125px;height:17px;border-color:#f2f2f2 #111 #111 #f2f2f2;box-shadow:inset -1px -1px 0 #7a7a7a;"></div>
<div class="btn" style="left:141px;top:899px;width:16px;height:17px;"></div>
<span class="t " style="left:62px;top:900.69px;line-height:13px;letter-spacing:0.052px;">0 / 100</span>
<span class="t " style="left:5px;top:900.69px;line-height:13px;">&lt;</span><span class="t " style="left:145.5px;top:900.69px;line-height:13px;">&gt;</span>
<div class="a" style="left:0;top:917px;width:1096px;height:1px;background:#e6e6e6;"></div><div class="a" style="left:0;top:918px;width:1096px;height:1px;background:#707070;"></div><div class="a" style="left:50px;top:944px;width:1046px;height:1px;background:#f0f0f0;"></div>
<div class="a" style="left:50px;top:919px;width:9px;height:25px;background:#86a8cc;border:1px solid #808488;"></div><div class="a" style="left:54px;top:919px;width:1px;height:25px;background:#4a5a70;"></div>
<svg style="left:0;top:917px" width="1100" height="30" viewBox="0 917 1100 30" shape-rendering="crispEdges"><path d="M64.5 919V930M74.5 919V930M84.5 919V930M94.5 919V930M113.5 919V930M123.5 919V930M133.5 919V930M143.5 919V930M163.5 919V930M173.5 919V930M182.5 919V930M192.5 919V930M212.5 919V930M222.5 919V930M232.5 919V930M242.5 919V930M262.5 919V930M271.5 919V930M281.5 919V930M291.5 919V930M311.5 919V930M321.5 919V930M331.5 919V930M341.5 919V930M360.5 919V930M370.5 919V930M380.5 919V930M390.5 919V930M410.5 919V930M420.5 919V930M429.5 919V930M439.5 919V930M459.5 919V930M469.5 919V930M479.5 919V930M489.5 919V930M509.5 919V930M518.5 919V930M528.5 919V930M538.5 919V930M558.5 919V930M568.5 919V930M578.5 919V930M588.5 919V930M607.5 919V930M617.5 919V930M627.5 919V930M637.5 919V930M657.5 919V930M667.5 919V930M677.5 919V930M686.5 919V930M706.5 919V930M716.5 919V930M726.5 919V930M736.5 919V930M756.5 919V930M765.5 919V930M775.5 919V930M785.5 919V930M805.5 919V930M815.5 919V930M825.5 919V930M835.5 919V930M854.5 919V930M864.5 919V930M874.5 919V930M884.5 919V930M904.5 919V930M914.5 919V930M924.5 919V930M933.5 919V930M953.5 919V930M963.5 919V930M973.5 919V930M983.5 919V930M1003.5 919V930M1012.5 919V930M1022.5 919V930M1032.5 919V930" stroke="#7e7e7e" stroke-width="1"/><path d="M54.5 919V931M54.5 942V944M103.5 919V931M103.5 942V944M153.5 919V931M153.5 942V944M202.5 919V931M202.5 942V944M252.5 919V931M252.5 942V944M301.5 919V931M301.5 942V944M350.5 919V931M350.5 942V944M400.5 919V931M400.5 942V944M449.5 919V931M449.5 942V944M499.5 919V931M499.5 942V944M548.5 919V931M548.5 942V944M597.5 919V931M597.5 942V944M647.5 919V931M647.5 942V944M696.5 919V931M696.5 942V944M746.5 919V931M746.5 942V944M795.5 919V931M795.5 942V944M844.5 919V931M844.5 942V944M894.5 919V931M894.5 942V944M943.5 919V931M943.5 942V944M993.5 919V931M993.5 942V944M1042.5 919V931M1042.5 942V944" stroke="#6a6a6a" stroke-width="1"/></svg>
<svg style="left:0;top:917px" width="1100" height="30" viewBox="0 917 1100 30"><text x="54.5" y="941" font-size="11.500" text-anchor="middle" font-family="Liberation Sans,sans-serif" fill="#000">0</text><text x="103.9" y="941" font-size="11.500" text-anchor="middle" font-family="Liberation Sans,sans-serif" fill="#000">5</text><text x="153.3" y="941" font-size="11.500" text-anchor="middle" font-family="Liberation Sans,sans-serif" fill="#000">10</text><text x="202.7" y="941" font-size="11.500" text-anchor="middle" font-family="Liberation Sans,sans-serif" fill="#000">15</text><text x="252.1" y="941" font-size="11.500" text-anchor="middle" font-family="Liberation Sans,sans-serif" fill="#000">20</text><text x="301.5" y="941" font-size="11.500" text-anchor="middle" font-family="Liberation Sans,sans-serif" fill="#000">25</text><text x="350.9" y="941" font-size="11.500" text-anchor="middle" font-family="Liberation Sans,sans-serif" fill="#000">30</text><text x="400.3" y="941" font-size="11.500" text-anchor="middle" font-family="Liberation Sans,sans-serif" fill="#000">35</text><text x="449.7" y="941" font-size="11.500" text-anchor="middle" font-family="Liberation Sans,sans-serif" fill="#000">40</text><text x="499.1" y="941" font-size="11.500" text-anchor="middle" font-family="Liberation Sans,sans-serif" fill="#000">45</text><text x="548.5" y="941" font-size="11.500" text-anchor="middle" font-family="Liberation Sans,sans-serif" fill="#000">50</text><text x="598.0" y="941" font-size="11.500" text-anchor="middle" font-family="Liberation Sans,sans-serif" fill="#000">55</text><text x="647.4" y="941" font-size="11.500" text-anchor="middle" font-family="Liberation Sans,sans-serif" fill="#000">60</text><text x="696.8" y="941" font-size="11.500" text-anchor="middle" font-family="Liberation Sans,sans-serif" fill="#000">65</text><text x="746.2" y="941" font-size="11.500" text-anchor="middle" font-family="Liberation Sans,sans-serif" fill="#000">70</text><text x="795.6" y="941" font-size="11.500" text-anchor="middle" font-family="Liberation Sans,sans-serif" fill="#000">75</text><text x="845.0" y="941" font-size="11.500" text-anchor="middle" font-family="Liberation Sans,sans-serif" fill="#000">80</text><text x="894.4" y="941" font-size="11.500" text-anchor="middle" font-family="Liberation Sans,sans-serif" fill="#000">85</text><text x="943.8" y="941" font-size="11.500" text-anchor="middle" font-family="Liberation Sans,sans-serif" fill="#000">90</text><text x="993.2" y="941" font-size="11.500" text-anchor="middle" font-family="Liberation Sans,sans-serif" fill="#000">95</text><text x="1042.6" y="941" font-size="11.500" text-anchor="middle" font-family="Liberation Sans,sans-serif" fill="#000">100</text><rect x="13.500" y="923.500" width="16" height="5" fill="#e8e8e8" stroke="#000" stroke-width="1"/><path d="M13 928.500H30" stroke="#000" stroke-width="1.600"/><path d="M15 927Q16.500 924.500 19 925.500T23 926.500H28" fill="none" stroke="#000" stroke-width="0.900"/><path d="M16.500 930.500V935M14.500 932.500L16.500 930.500L18.500 932.500M26.500 930.500V935M24.500 933L26.500 935L28.500 933" fill="none" stroke="#000" stroke-width="1"/><rect x="13" y="936" width="17" height="3" fill="#000"/><path d="M14.500 937.500H15.500M16.500 937.500H21.500M23 937.500H27M28 937.500H29" stroke="#e0e0e0" stroke-width="0.900"/></svg>
<div class="a" style="left:2px;top:947px;width:96px;height:21px;background:#dfc5c5;border:1px solid;border-color:#7a7a7a #f4f4f4 #f4f4f4 #7a7a7a;"></div>
<div class="a" style="left:2px;top:970px;width:96px;height:21px;background:#fff;border:1px solid;border-color:#7a7a7a #f4f4f4 #f4f4f4 #7a7a7a;"></div>
<div class="a" style="left:101px;top:945px;width:1px;height:49px;background:#8a8a8a;"></div><div class="a" style="left:102px;top:945px;width:2px;height:49px;background:#eee;"></div>
<div class="a" style="left:107px;top:948px;width:327px;height:21px;border:1px solid;border-color:#8a8a8a #f4f4f4 #f4f4f4 #8a8a8a;"></div>
<span class="t " style="left:113.5px;top:952.19px;line-height:13px;letter-spacing:-0.108px;">1 Object Selected</span>
<div class="a" style="left:107px;top:973px;width:580px;height:21px;border:1px solid;border-color:#8a8a8a transparent transparent #8a8a8a;"></div>
<span class="t " style="left:113.5px;top:977.19px;line-height:13px;letter-spacing:-0.150px;">Rendering Time  0:00:00</span>
<svg style="left:440px;top:947px" width="50" height="22" viewBox="440 947 50 22"><path d="M445 956.500V954.500A2.700 2.700 0 0 1 450.500 954.500V956.500" fill="none" stroke="#000" stroke-width="1.200"/><rect x="443.500" y="956.500" width="8.500" height="6.500" fill="#111"/><path d="M444 958.500H452M444 960.500H452" stroke="#c8c8c8" stroke-width="0.800"/><rect x="468.500" y="950.500" width="14" height="14" fill="#d8d8d8" stroke="#000" stroke-width="1"/><path d="M475.500 951V964M469 957.500H482" stroke="#000" stroke-width="0.800"/><circle cx="475.500" cy="957.500" r="2.300" fill="#444" stroke="#000" stroke-width="0.700"/></svg>
<span class="t " style="left:491px;top:952.19px;line-height:13px;">X:</span>
<div class="sunk" style="left:501px;top:948px;width:57px;height:21px;"></div>
<span class="t " style="left:506px;top:952.19px;line-height:13px;">36,753</span>
<div class="btn" style="left:560px;top:950px;width:11px;height:16px;background:#d4d4d4;"></div>
<svg style="left:562px;top:953px" width="7" height="10"><path d="M0.500 3.500H6.500L3.500 0.500ZM0.500 6.500H6.500L3.500 9.500Z" fill="#000"/></svg>
<span class="t " style="left:573px;top:952.19px;line-height:13px;">Y:</span>
<div class="sunk" style="left:583px;top:948px;width:57px;height:21px;"></div>
<span class="t " style="left:588px;top:952.19px;line-height:13px;">1,031</span>
<div class="btn" style="left:642px;top:950px;width:11px;height:16px;background:#d4d4d4;"></div>
<svg style="left:644px;top:953px" width="7" height="10"><path d="M0.500 3.500H6.500L3.500 0.500ZM0.500 6.500H6.500L3.500 9.500Z" fill="#000"/></svg>
<span class="t " style="left:655.5px;top:952.19px;line-height:13px;">Z:</span>
<div class="sunk" style="left:665px;top:948px;width:57px;height:21px;"></div>
<span class="t " style="left:670px;top:952.19px;line-height:13px;">0,0</span>
<div class="btn" style="left:724px;top:950px;width:11px;height:16px;background:#d4d4d4;"></div>
<svg style="left:726px;top:953px" width="7" height="10"><path d="M0.500 3.500H6.500L3.500 0.500ZM0.500 6.500H6.500L3.500 9.500Z" fill="#000"/></svg>
<div class="a" style="left:737px;top:948px;width:100px;height:21px;border:1px solid;border-color:#8a8a8a #f4f4f4 #f4f4f4 #8a8a8a;"></div>
<span class="t " style="left:743.5px;top:952.19px;line-height:13px;letter-spacing:-0.248px;">Grid = 10,0</span>
<div class="a" style="left:737px;top:973px;width:100px;height:21px;border:1px solid;border-color:#8a8a8a #f4f4f4 #f4f4f4 #8a8a8a;"></div>
<span class="t " style="left:743.5px;top:977.19px;line-height:13px;letter-spacing:-0.046px;">Add Time Tag</span>
<div class="a" style="left:689px;top:972px;width:23px;height:22px;background:#f0cc50;border:1px solid;border-color:#6a6a6a #f6f6f6 #f6f6f6 #6a6a6a;"></div>
<svg style="left:689px;top:972px" width="45" height="22" viewBox="689 972 45 22"><path d="M693.500 979.500L700.500 976L707.500 979.500V987L700.500 990.500L693.500 987Z" fill="#fff" stroke="#000" stroke-width="1"/><path d="M693.500 979.500L700.500 983L707.500 979.500M700.500 983V990.500" fill="none" stroke="#000" stroke-width="1"/><path d="M718 978A6 6 0 0 0 728 986Z" fill="#e0e0e0" stroke="#a0a0a0" stroke-width="0.800"/><path d="M723 982L727 977.500M720 989.500H727M723.500 986V989.500" stroke="#a8a8a8" stroke-width="1"/></svg>
<div class="btn" style="left:838px;top:947px;width:44px;height:44px;"></div>
<svg style="left:838px;top:947px" width="44" height="44" viewBox="838 947 44 44"><circle cx="852.500" cy="968.500" r="3.700" fill="none" stroke="#000" stroke-width="1.800"/><path d="M856 968.500H872M866.500 968.500V972.500M870.500 968.500V972.500" stroke="#000" stroke-width="2"/></svg>
<div class="btn" style="left:885px;top:947px;width:48px;height:22px;"></div>
<span class="t " style="left:888.5px;top:952.19px;line-height:13px;letter-spacing:-0.268px;">Auto Key</span>
<div class="btn" style="left:885px;top:969px;width:48px;height:22px;"></div>
<span class="t " style="left:891.5px;top:974.69px;line-height:13px;letter-spacing:-0.289px;">Set Key</span>
<div class="sunk dd" style="left:936px;top:947px;width:115px;height:21px;"></div>
<div class="btn" style="left:1033px;top:949px;width:17px;height:17px;background:#dcdcdc;"></div>
<svg style="left:1038px;top:956px" width="7" height="4"><path d="M0 0H7L3.500 4Z" fill="#000"/></svg>
<span class="t " style="left:940.5px;top:951.19px;line-height:13px;letter-spacing:-0.163px;">Selected</span>
<svg style="left:936px;top:970px" width="24" height="22" viewBox="936 970 24 22"><path d="M940 981C942 988 944 989 946 981S950 972 952.500 979" fill="none" stroke="#e02020" stroke-width="1.200"/><path d="M940 979.500h3M944 987.500h3M947.500 975.500h3M951 980.500h3" stroke="#333" stroke-width="0.800"/><path d="M953 990.500L957.500 986L957.500 990.500Z" fill="#fff"/><path d="M957.500 990.500L954.800 990.500L957.500 987.800Z" fill="#000"/></svg>
<div class="btn" style="left:962px;top:970px;width:90px;height:21px;"></div>
<span class="t " style="left:979.5px;top:974.69px;line-height:13px;letter-spacing:-0.366px;">Key Filters...</span>
<svg style="left:1055px;top:945px" width="50" height="48" viewBox="1055 945 50 48"><path d="M1061 953.500V962" stroke="#000" stroke-width="1.800"/><path d="M1062 957.700L1069 953.500V962ZM1069 957.700L1076 953.500V962Z" fill="#000"/><path d="M1081.500 950V966M1081.500 971V990" stroke="#808080" stroke-width="1"/><path d="M1088 957.700L1095 953.500V962Z" fill="#000"/><path d="M1096.500 953.500V962M1099.500 953.500V962" stroke="#000" stroke-width="1.800"/><path d="M1063 975.500V983M1074 975.500V983" stroke="#000" stroke-width="1.600"/><path d="M1064 979.200L1068.500 976V982.500ZM1073 979.200L1068.500 976V982.500Z" fill="#000"/></svg>
<div class="sunk" style="left:1083px;top:970px;width:40px;height:20px;"></div>
<span class="t " style="left:1087.5px;top:974.19px;line-height:13px;">0</span>
<div class="a" style="left:1100px;top:899px;width:1px;height:39px;background:#8a8a8a;"></div><div class="a" style="left:1101px;top:899px;width:1px;height:39px;background:#eee;"></div>
<div class="a" style="left:1103px;top:909px;width:177px;height:79px;background:#3a4044;border:1px solid #2a2e32;"></div>
<div class="a" style="left:1106px;top:912px;width:172px;height:73px;border:1px solid #000;background:linear-gradient(#585b5e 0,#45484b 25%,#26292d 55%,#24272b 80%,#2c2f33 100%);"></div>
<span class="t" style="left:1113.500px;top:918px;font-size:7px;line-height:8px;letter-spacing:1.450px;color:#8e8e8e;transform:scaleX(1.25);transform-origin:0 0;">30/43</span>
<span class="t" style="left:1137px;top:929px;font-size:7px;line-height:8px;letter-spacing:0.650px;color:#8e8e8e;transform:scaleX(1.25);transform-origin:0 0;">6 KBPS   44. 1KHZ  KHZ</span>
<span class="t " style="left:1113px;top:935.30px;line-height:17px;font-size:15px;color:#7c7c78;letter-spacing:-0.092px;">Love &amp; Death (7:40)</span>
<span class="t " style="left:1113.5px;top:953.69px;line-height:13px;color:#8a8a88;letter-spacing:0.246px;">by ???</span>
<span class="t " style="left:1113.5px;top:966.69px;line-height:13px;color:#8a8a88;">(it)</span>
<!-- taskbar -->
<div class="a" style="left:0;top:994px;width:1280px;height:30px;background:linear-gradient(#1a1a1a 0,#5a5a5a 1px,#4a4a4a 3px,#3e3e3e 12px,#2c2c2c 14px,#262626 26px,#1e1e1e 30px);"></div>
<div class="a" style="left:0;top:994px;width:97px;height:30px;border-radius:0 14px 14px 0 / 0 16px 16px 0;background:linear-gradient(#8a3a0c 0,#f4945a 2px,#ea7a3a 9px,#d65e1c 15px,#c85214 22px,#b0460e 30px);"></div>
<svg style="left:10px;top:1000px" width="19" height="17" viewBox="0 0 19 17"><path d="M2.500 1.500Q5.500 0 8.500 1.800L7.300 7.500Q4.500 6 1.300 7.300Z" fill="#e8502a"/><path d="M9.700 2.300Q12.500 3.800 16 2.300L14.800 8Q11.500 9.300 8.500 8Z" fill="#7ac040"/><path d="M1 8.700Q4.200 7.300 7 8.800L5.800 14.500Q3 13 -0.200 14.300Z" fill="#3a7ae0"/><path d="M8.200 9.300Q11.200 10.700 14.500 9.300L13.300 15Q10 16.400 7 15Z" fill="#f4c020"/></svg>
<span class="t" style="left:35px;top:995px;font-size:17px;line-height:24px;font-weight:bold;font-style:italic;color:#fff;text-shadow:1px 1px 1px #5a2a08;letter-spacing:-0.200px;">пуск</span>
<svg style="left:100px;top:996px" width="100" height="26" viewBox="100 996 100 26"><circle cx="116" cy="1008.500" r="7.700" fill="#e8741a"/><circle cx="117.300" cy="1007" r="5.300" fill="#3a5ec8"/><path d="M112 1003.500L116.500 1005.500C118.500 1006.500 118 1009 116 1009.500L113 1009Z" fill="#f4a030"/><path d="M109 1004C111 1001 114 1000.500 116 1001C113.500 1002 112.500 1003 112.500 1004.500Z" fill="#f8c848"/><rect x="131.500" y="1001.500" width="12" height="14" rx="1" fill="#3a8ae0" stroke="#1a4a9a" stroke-width="0.800"/><text x="133" y="1013.500" font-size="12" font-weight="bold" font-family="Liberation Sans,sans-serif" fill="#fff">e</text><path d="M141 1003L146 1005.500L141 1008Z" fill="#f0a030"/><rect x="154.500" y="1001" width="15.500" height="15.500" fill="#1a2a9a"/><text x="155.200" y="1008" font-size="6.500" font-weight="bold" font-family="Liberation Sans,sans-serif" fill="#fff" textLength="14" lengthAdjust="spacingAndGlyphs">DEV</text><text x="155.500" y="1015.500" font-size="7.500" font-weight="bold" font-family="Liberation Sans,sans-serif" fill="#4a9af0" textLength="13.500" lengthAdjust="spacingAndGlyphs">C++</text><path d="M182.500 1001L185.500 1003.500L182.500 1006M186.500 1001L189.500 1003.500L186.500 1006" fill="none" stroke="#fff" stroke-width="1.200"/></svg>
<div class="a" style="left:199px;top:998px;width:156px;height:23px;border-radius:3px;border:1px solid #262626;background:linear-gradient(#4e4e4e 0,#444 40%,#333 48%,#2e2e2e 100%);"></div>
<svg style="left:207px;top:1001px" width="16" height="16"><rect width="16" height="16" fill="#8a6ad0"/><rect x="1" y="1" width="14" height="14" fill="#a88ae8"/><path d="M4.500 3.500V12.500M8.500 3.500V12.500M4.500 4H10" stroke="#fff" stroke-width="2"/></svg>
<span class="t " style="left:226.5px;top:1002.99px;line-height:13px;color:#fff;letter-spacing:-0.088px;">Protean [D:\Blitz3D\S…</span>
<div class="a" style="left:359px;top:998px;width:156px;height:23px;border-radius:3px;border:1px solid #262626;background:linear-gradient(#4e4e4e 0,#444 40%,#333 48%,#2e2e2e 100%);"></div>
<svg style="left:367px;top:1001px" width="17" height="17" viewBox="108 1000 17 17"><circle cx="116" cy="1008.500" r="7.700" fill="#e8741a"/><circle cx="117.300" cy="1007" r="5.300" fill="#3a5ec8"/><path d="M112 1003.500L116.500 1005.500C118.500 1006.500 118 1009 116 1009.500L113 1009Z" fill="#f4a030"/><path d="M109 1004C111 1001 114 1000.500 116 1001C113.500 1002 112.500 1003 112.500 1004.500Z" fill="#f8c848"/></svg>
<span class="t " style="left:386.5px;top:1002.99px;line-height:13px;color:#fff;letter-spacing:0.015px;">www.boolean.name -…</span>
<div class="a" style="left:519px;top:998px;width:156px;height:23px;border-radius:3px;border:1px solid #262626;background:linear-gradient(#4e4e4e 0,#444 40%,#333 48%,#2e2e2e 100%);"></div>
<svg style="left:527px;top:1001px" width="17" height="17"><path d="M1.500 4.500H10.500V16H1.500Z" fill="#f4f4f4" stroke="#555" stroke-width="0.800"/><path d="M3 7.500H8M3 10H8M3 12.500H8" stroke="#555" stroke-width="0.800"/><text x="7" y="11" font-size="13" font-weight="bold" font-family="Liberation Sans,sans-serif" fill="#f0d800" stroke="#6a5a00" stroke-width="0.400">?</text></svg>
<span class="t " style="left:546.5px;top:1002.99px;line-height:13px;color:#fff;letter-spacing:0.054px;">Start</span>
<div class="a" style="left:678px;top:998px;width:158px;height:23px;border-radius:3px;border:1px solid #4a4a4a;background:linear-gradient(#0c0c0c,#161616 50%,#101010);"></div>
<svg style="left:688px;top:1001px" width="16" height="16" viewBox="0 0 16 16"><rect x="0" y="0" width="16" height="16" fill="#053c3c"/><rect x="0" y="0" width="15" height="15" fill="#10989a"/><rect x="0" y="0" width="15" height="6" fill="#28b8b8" opacity="0.6"/><circle cx="7.800" cy="7.800" r="5.600" fill="none" stroke="#d8eeee" stroke-width="1.100"/><path d="M10.800 5.300C9 3.600 5.500 4.200 5.300 6.600S9 8 9.800 9.400S7.500 11.800 5 10.300" fill="none" stroke="#ffffff" stroke-width="2.200" stroke-linecap="round"/></svg>
<span class="t " style="left:707px;top:1003.49px;line-height:13px;color:#fff;letter-spacing:0.121px;">Untitled     - Project …</span>
<div class="a" style="left:839px;top:998px;width:156px;height:23px;border-radius:3px;border:1px solid #262626;background:linear-gradient(#4e4e4e 0,#444 40%,#333 48%,#2e2e2e 100%);"></div>
<svg style="left:848px;top:1001px" width="17" height="17"><rect x="1.500" y="1.500" width="12" height="14" fill="#f0f0f8" stroke="#3a4a9a" stroke-width="1"/><rect x="2" y="2" width="11" height="3" fill="#2a3ab0"/><path d="M3 13L13 6" stroke="#d02020" stroke-width="1.500"/><path d="M3.500 8H8M3.500 10.500H6" stroke="#3a4a9a" stroke-width="0.800"/></svg>
<span class="t " style="left:867px;top:1002.99px;line-height:13px;color:#fff;letter-spacing:-0.046px;">Безымянный (82%) -…</span>
<div class="a" style="left:1115px;top:1003px;width:17px;height:15px;background:#d8d8d8;"></div><span class="t " style="left:1117px;top:1004.19px;line-height:13px;letter-spacing:-1.141px;">EN</span>
<div class="a" style="left:1151px;top:995px;width:129px;height:29px;background:linear-gradient(#3a3a3a 0,#2a2a2a 12px,#161616 14px,#141414 100%);"></div>
<svg style="left:1140px;top:996px" width="140" height="28" viewBox="1140 996 140 28"><circle cx="1151.500" cy="1010" r="7" fill="#4a4a4a" stroke="#7a7a7a" stroke-width="1"/><path d="M1153.500 1006.500L1149.500 1010L1153.500 1013.500" fill="none" stroke="#e0e0e0" stroke-width="1.500"/><path d="M1172 1001L1163 1011.500H1169L1166 1019L1177 1007.500H1171Z" fill="#f09020" stroke="#8a4a08" stroke-width="0.700"/><rect x="1181.500" y="1002.500" width="8" height="7" fill="#6a8ae0" stroke="#d0d8f0" stroke-width="0.800"/><rect x="1186.500" y="1007.500" width="8" height="7" fill="#4a6ad0" stroke="#d0d8f0" stroke-width="0.800"/><path d="M1183 1012.500H1188M1188 1017.500H1193" stroke="#c0c0c0" stroke-width="1.200"/><circle cx="1206.500" cy="1009.500" r="7.500" fill="#3a5ac0" stroke="#b0c0f0" stroke-width="1"/><path d="M1208.500 1003.500L1203.500 1010.500H1206.500L1204.500 1016L1210 1008.500H1207Z" fill="#fff"/><circle cx="1224.500" cy="1009.500" r="7.500" fill="#2a6ad0" stroke="#b0d0f8" stroke-width="1"/><text x="1221" y="1013.500" font-size="12" font-weight="bold" font-family="Liberation Sans,sans-serif" fill="#fff">a</text></svg>
<span class="t " style="left:1239px;top:1003.19px;line-height:13px;color:#fff;letter-spacing:-0.105px;">15:21</span>
<!-- red annotations -->
<svg style="left:0;top:0" width="1280" height="1024" viewBox="0 0 1280 1024">
<g fill="none" stroke="#f24a46" stroke-width="3.400">
<ellipse cx="1140.900" cy="101.100" rx="19" ry="26"/>
<ellipse cx="1173.600" cy="473.300" rx="99.200" ry="48.400"/>
<ellipse cx="913.800" cy="659.100" rx="174.800" ry="139.500"/>
</g>
<g fill="#f24a46" font-family="Liberation Serif,serif" font-size="44">
<text x="1159.500" y="153">1</text>
<text x="1102" y="486">2</text>
<text x="959.500" y="574">3</text>
</g>
</svg>
</div></body></html>
